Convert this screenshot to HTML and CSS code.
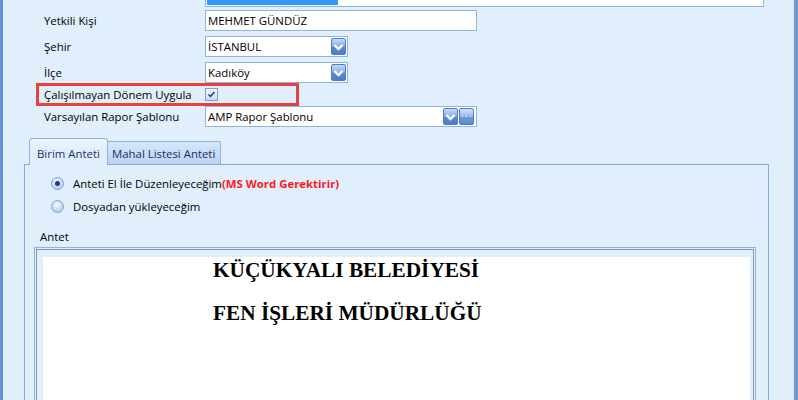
FILE: index.html
```html
<!DOCTYPE html>
<html lang="tr">
<head>
<meta charset="utf-8">
<title>Antet</title>
<link rel="stylesheet" href="styles.css">
</head>
<body>
<div class="window">
  <div class="form">
    <div class="row row-top">
      <span class="label"></span>
      <div class="field w559"><span class="sel"></span></div>
    </div>
    <div class="row row-first">
      <span class="label">Yetkili Kişi</span>
      <div class="field w272">MEHMET GÜNDÜZ</div>
    </div>
    <div class="row">
      <span class="label">Şehir</span>
      <div class="field w143"><span class="val">İSTANBUL</span><span class="btn drop"><svg width="15" height="17" viewBox="0 0 15 17"><path d="M3.5 7 L7.5 11 L11.5 7" fill="none" stroke="#fff" stroke-width="2.4"/></svg></span></div>
    </div>
    <div class="row">
      <span class="label">İlçe</span>
      <div class="field w143"><span class="val">Kadıköy</span><span class="btn drop"><svg width="15" height="17" viewBox="0 0 15 17"><path d="M3.5 7 L7.5 11 L11.5 7" fill="none" stroke="#fff" stroke-width="2.4"/></svg></span></div>
    </div>
    <div class="row row-check">
      <span class="label">Çalışılmayan Dönem Uygula</span>
      <span class="check"><svg width="11" height="11" viewBox="0 0 11 11"><path d="M2.5 5.5 L4.5 7.5 L8.5 3" fill="none" stroke="#1f3a8a" stroke-width="1.5"/></svg></span>
      <span class="highlight"></span>
    </div>
    <div class="row row-tight">
      <span class="label">Varsayılan Rapor Şablonu</span>
      <div class="field w272"><span class="val">AMP Rapor Şablonu</span><span class="btn drop"><svg width="15" height="17" viewBox="0 0 15 17"><path d="M3.5 7 L7.5 11 L11.5 7" fill="none" stroke="#fff" stroke-width="2.4"/></svg></span><span class="btn ellipsis"><svg width="15" height="17" viewBox="0 0 15 17"><rect x="3" y="8" width="1" height="1" fill="#fff"/><rect x="7" y="8" width="1" height="1" fill="#fff"/><rect x="11" y="8" width="1" height="1" fill="#fff"/></svg></span></div>
    </div>
  </div>

  <div class="tabctl">
    <div class="tabstrip">
      <span class="tab tab-active">Birim Anteti</span>
      <span class="tab tab-inactive">Mahal Listesi Anteti</span>
    </div>
    <div class="panel">
      <div class="radio-row">
        <span class="radio radio-on"></span>
        <span>Anteti El İle Düzenleyeceğim</span><span class="warn">(MS Word Gerektirir)</span>
      </div>
      <div class="radio-row radio-row2">
        <span class="radio"></span>
        <span>Dosyadan yükleyeceğim</span>
      </div>
      <div class="antet-label">Antet</div>
      <div class="antet-outer">
        <div class="antet-inner">
          <div class="doc">
            <p class="doc-line">KÜÇÜKYALI BELEDİYESİ</p>
            <p class="doc-line">FEN İŞLERİ MÜDÜRLÜĞÜ</p>
          </div>
        </div>
      </div>
    </div>
  </div>
</div>
</body>
</html>
```

FILE: styles.css
```css
* { box-sizing: border-box; }
html, body { margin: 0; padding: 0; }
body {
  width: 798px;
  height: 400px;
  overflow: hidden;
  background: #e1effd;
  font-family: "Open Sans", "Noto Sans", "DejaVu Sans", sans-serif;
  font-size: 11.4px;
  color: #000;
}
.window {
  width: 798px;
  height: 400px;
  overflow: hidden;
  background: #e1effd;
  border-left: 3px solid #6990cf;
  border-right: 4px solid #6f98d6;
}
.form { margin-top: -14px; }
.row {
  position: relative;
  display: flex;
  align-items: center;
  height: 21px;
  margin-top: 5px;
}
.row-top { margin-top: 0; }
.row-first { margin-top: 3px; }
.row-tight { margin-top: 0; }
.row-check { margin-top: 0; height: 23px; }
.label {
  width: 202px;
  padding-left: 41px;
  white-space: nowrap;
}
.field {
  height: 21px;
  border: 1px solid #8eb4e6;
  background: #fff;
  display: flex;
  align-items: center;
  padding-left: 2px;
  white-space: nowrap;
}
.w559 { width: 559px; align-items: flex-start; padding-left: 1px; }
.w272 { width: 272px; }
.w143 { width: 143px; }
.sel {
  display: block;
  width: 131px;
  height: 16px;
  margin-top: 2px;
  background: #3399ff;
}
.val { flex: 1; }
.btn {
  width: 15px;
  height: 17px;
  border-radius: 2px;
  border: 1px solid #5479bd;
  background: linear-gradient(#c3dbf8 0%, #8cb1e8 45%, #5f8ad0 55%, #4d7bc8 100%);
  display: flex;
  align-items: center;
  justify-content: center;
  flex: none;
}
.btn svg { display: block; margin: -1px; }
.w143 .drop { margin-right: 1px; }
.w272 .drop { margin-right: 1px; }
.ellipsis {
  margin-right: 2px;
  background: linear-gradient(#d0e3fa 0%, #9dbeec 45%, #7098d8 55%, #6189d0 100%);
}
.check {
  width: 13px;
  height: 13px;
  border: 1px solid #7d9fd6;
  background: linear-gradient(#f3f8fe, #c9dbf4);
  display: flex;
  align-items: center;
  justify-content: center;
}
.highlight {
  position: absolute;
  left: 33px;
  top: 0;
  width: 263px;
  height: 23px;
  border: 3px solid #e8413c;
}

.tabctl {
  margin-top: 11px;
  margin-left: 21px;
  width: 745px;
}
.tabstrip {
  display: flex;
  align-items: flex-end;
  height: 26px;
  padding-left: 5px;
  position: relative;
  z-index: 2;
}
.tab {
  display: flex;
  align-items: center;
  white-space: nowrap;
  border: 1px solid #8db2e3;
  border-bottom: none;
  color: #1b2f6b;
}
.tab-active {
  align-self: flex-start;
  width: 79px;
  height: 27px;
  padding-left: 7px;
  padding-top: 2px;
  border-radius: 4px 4px 0 0;
  background: linear-gradient(#eef6fe, #e1effd 40%);
  margin-bottom: -1px;
}
.tab-inactive {
  width: 114px;
  height: 23px;
  margin-left: -1px;
  padding-left: 4px;
  padding-top: 1px;
  border-radius: 2px 2px 0 0;
  background: linear-gradient(#d6e6fa, #bcd3f3);
}
.panel {
  position: relative;
  z-index: 1;
  height: 300px;
  border: 1px solid #84aae0;
  border-bottom: none;
  padding-top: 8px;
}
.radio-row {
  display: flex;
  align-items: center;
  height: 20px;
  padding-left: 26px;
  white-space: nowrap;
}
.radio-row2 { margin-top: 3px; }
.radio {
  width: 13px;
  height: 13px;
  border-radius: 50%;
  border: 1px solid #7f9fd3;
  background: radial-gradient(circle at 45% 35%, #ffffff 0%, #d3e3f8 40%, #9fbcea 100%);
  margin-right: 9px;
  display: flex;
  align-items: center;
  justify-content: center;
  flex: none;
}
.radio-on::after {
  content: "";
  width: 5px;
  height: 5px;
  border-radius: 50%;
  background: #1d3a7e;
}
.warn {
  color: #ff1a1a;
  font-weight: bold;
}
.antet-label {
  margin-top: 13px;
  padding-left: 15px;
  line-height: 16px;
  height: 16px;
}
.antet-outer {
  margin-top: 2px;
  margin-left: 9px;
  width: 722px;
  border: 1px solid #8db2e3;
  padding: 1px;
}
.antet-inner {
  border: 1px solid #8796aa;
  padding: 7px 3px 0 6px;
}
.doc {
  background: #fff;
  height: 200px;
  padding-left: 170px;
  padding-top: 1px;
}
.doc-line {
  margin: 0 0 19px 0;
  font-family: "Liberation Serif", "Times New Roman", serif;
  font-weight: bold;
  font-size: 21.3px;
  line-height: 24px;
  white-space: nowrap;
}
```
